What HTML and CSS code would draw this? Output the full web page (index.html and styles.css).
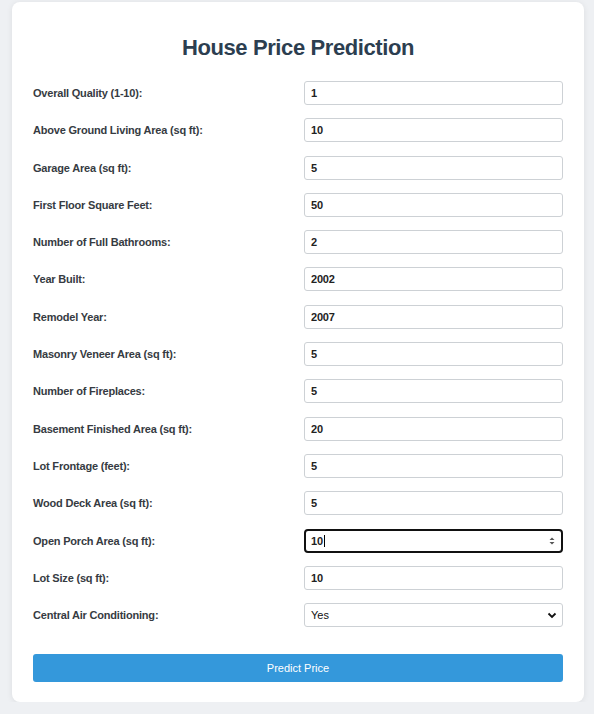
FILE: index.html
```html
<!DOCTYPE html>
<html lang="en">
<head>
<meta charset="utf-8">
<title>House Price Prediction</title>
<link rel="stylesheet" href="styles.css">
</head>
<body>
<div class="card">
  <h1 class="title">House Price Prediction</h1>
  <form class="form">
    <div class="row"><label class="label">Overall Quality (1-10):</label><div class="field"><input class="input" type="text" value="1"></div></div>
    <div class="row"><label class="label">Above Ground Living Area (sq ft):</label><div class="field"><input class="input" type="text" value="10"></div></div>
    <div class="row"><label class="label">Garage Area (sq ft):</label><div class="field"><input class="input" type="text" value="5"></div></div>
    <div class="row"><label class="label">First Floor Square Feet:</label><div class="field"><input class="input" type="text" value="50"></div></div>
    <div class="row"><label class="label">Number of Full Bathrooms:</label><div class="field"><input class="input" type="text" value="2"></div></div>
    <div class="row"><label class="label">Year Built:</label><div class="field"><input class="input" type="text" value="2002"></div></div>
    <div class="row"><label class="label">Remodel Year:</label><div class="field"><input class="input" type="text" value="2007"></div></div>
    <div class="row"><label class="label">Masonry Veneer Area (sq ft):</label><div class="field"><input class="input" type="text" value="5"></div></div>
    <div class="row"><label class="label">Number of Fireplaces:</label><div class="field"><input class="input" type="text" value="5"></div></div>
    <div class="row"><label class="label">Basement Finished Area (sq ft):</label><div class="field"><input class="input" type="text" value="20"></div></div>
    <div class="row"><label class="label">Lot Frontage (feet):</label><div class="field"><input class="input" type="text" value="5"></div></div>
    <div class="row"><label class="label">Wood Deck Area (sq ft):</label><div class="field"><input class="input" type="text" value="5"></div></div>
    <div class="row"><label class="label">Open Porch Area (sq ft):</label><div class="field"><div class="input input-focus"><span class="val">10</span><span class="caret"></span></div>
      <svg class="spinner" width="8" height="10" viewBox="0 0 8 10"><path d="M1.5 4 L4 1.5 L6.5 4 Z M1.5 6 L4 8.5 L6.5 6 Z" fill="#555"/></svg></div></div>
    <div class="row"><label class="label">Lot Size (sq ft):</label><div class="field"><input class="input" type="text" value="10"></div></div>
    <div class="row"><label class="label">Central Air Conditioning:</label><div class="field"><select class="input select"><option>Yes</option><option>No</option></select>
      <svg class="chev" width="10" height="7" viewBox="0 0 10 7"><path d="M1.5 1.5 L5 5 L8.5 1.5" fill="none" stroke="#111" stroke-width="1.8"/></svg></div></div>
    <button class="btn" type="button">Predict Price</button>
  </form>
</div>
</body>
</html>
```
FILE: styles.css
```css
html, body { margin: 0; padding: 0; }
body {
  background: #eef0f3;
  font-family: "Liberation Sans", Arial, sans-serif;
  padding: 2px 10px 0 12px;
}
.card {
  width: 572px;
  box-sizing: border-box;
  background: #fff;
  border-radius: 8px;
  box-shadow: 0 1px 6px rgba(0,0,0,0.08);
  padding: 32px 21px 20px;
}
.title {
  margin: 0 0 19px;
  text-align: center;
  font-size: 22px;
  letter-spacing: -0.4px;
  font-weight: bold;
  color: #2c3e50;
  line-height: 28px;
}
.form { display: flex; flex-direction: column; }
.row {
  display: grid;
  grid-template-columns: 1fr 1fr;
  column-gap: 12px;
  align-items: center;
  margin-bottom: 13.3px;
}
.label {
  font-size: 11px;
  letter-spacing: -0.2px;
  font-weight: bold;
  color: #363b42;
}
.field { position: relative; }
.input {
  display: block;
  width: 100%;
  height: 24px;
  box-sizing: border-box;
  border: 1px solid #cdd1d5;
  border-radius: 3px;
  padding: 0 6px;
  font-family: "Liberation Sans", Arial, sans-serif;
  font-size: 11px;
  letter-spacing: -0.2px;
  font-weight: bold;
  color: #222;
  background: #fff;
  outline: none;
}
.input-focus {
  border: 2px solid #111;
  border-radius: 4px;
  padding: 0 5px;
  display: flex;
  align-items: center;
}
.caret {
  display: inline-block;
  width: 1px;
  height: 12px;
  background: #000;
  margin-left: 1px;
}
.spinner { position: absolute; right: 7px; top: 7px; }
.select {
  appearance: none;
  -webkit-appearance: none;
  font-weight: normal;
  letter-spacing: 0;
  color: #111;
}
.chev { position: absolute; right: 6px; top: 9px; pointer-events: none; }
.btn {
  margin-top: 14px;
  height: 28px;
  border: none;
  border-radius: 3px;
  background: #3498db;
  color: #fff;
  font-family: "Liberation Sans", Arial, sans-serif;
  font-size: 11px;
}
```
